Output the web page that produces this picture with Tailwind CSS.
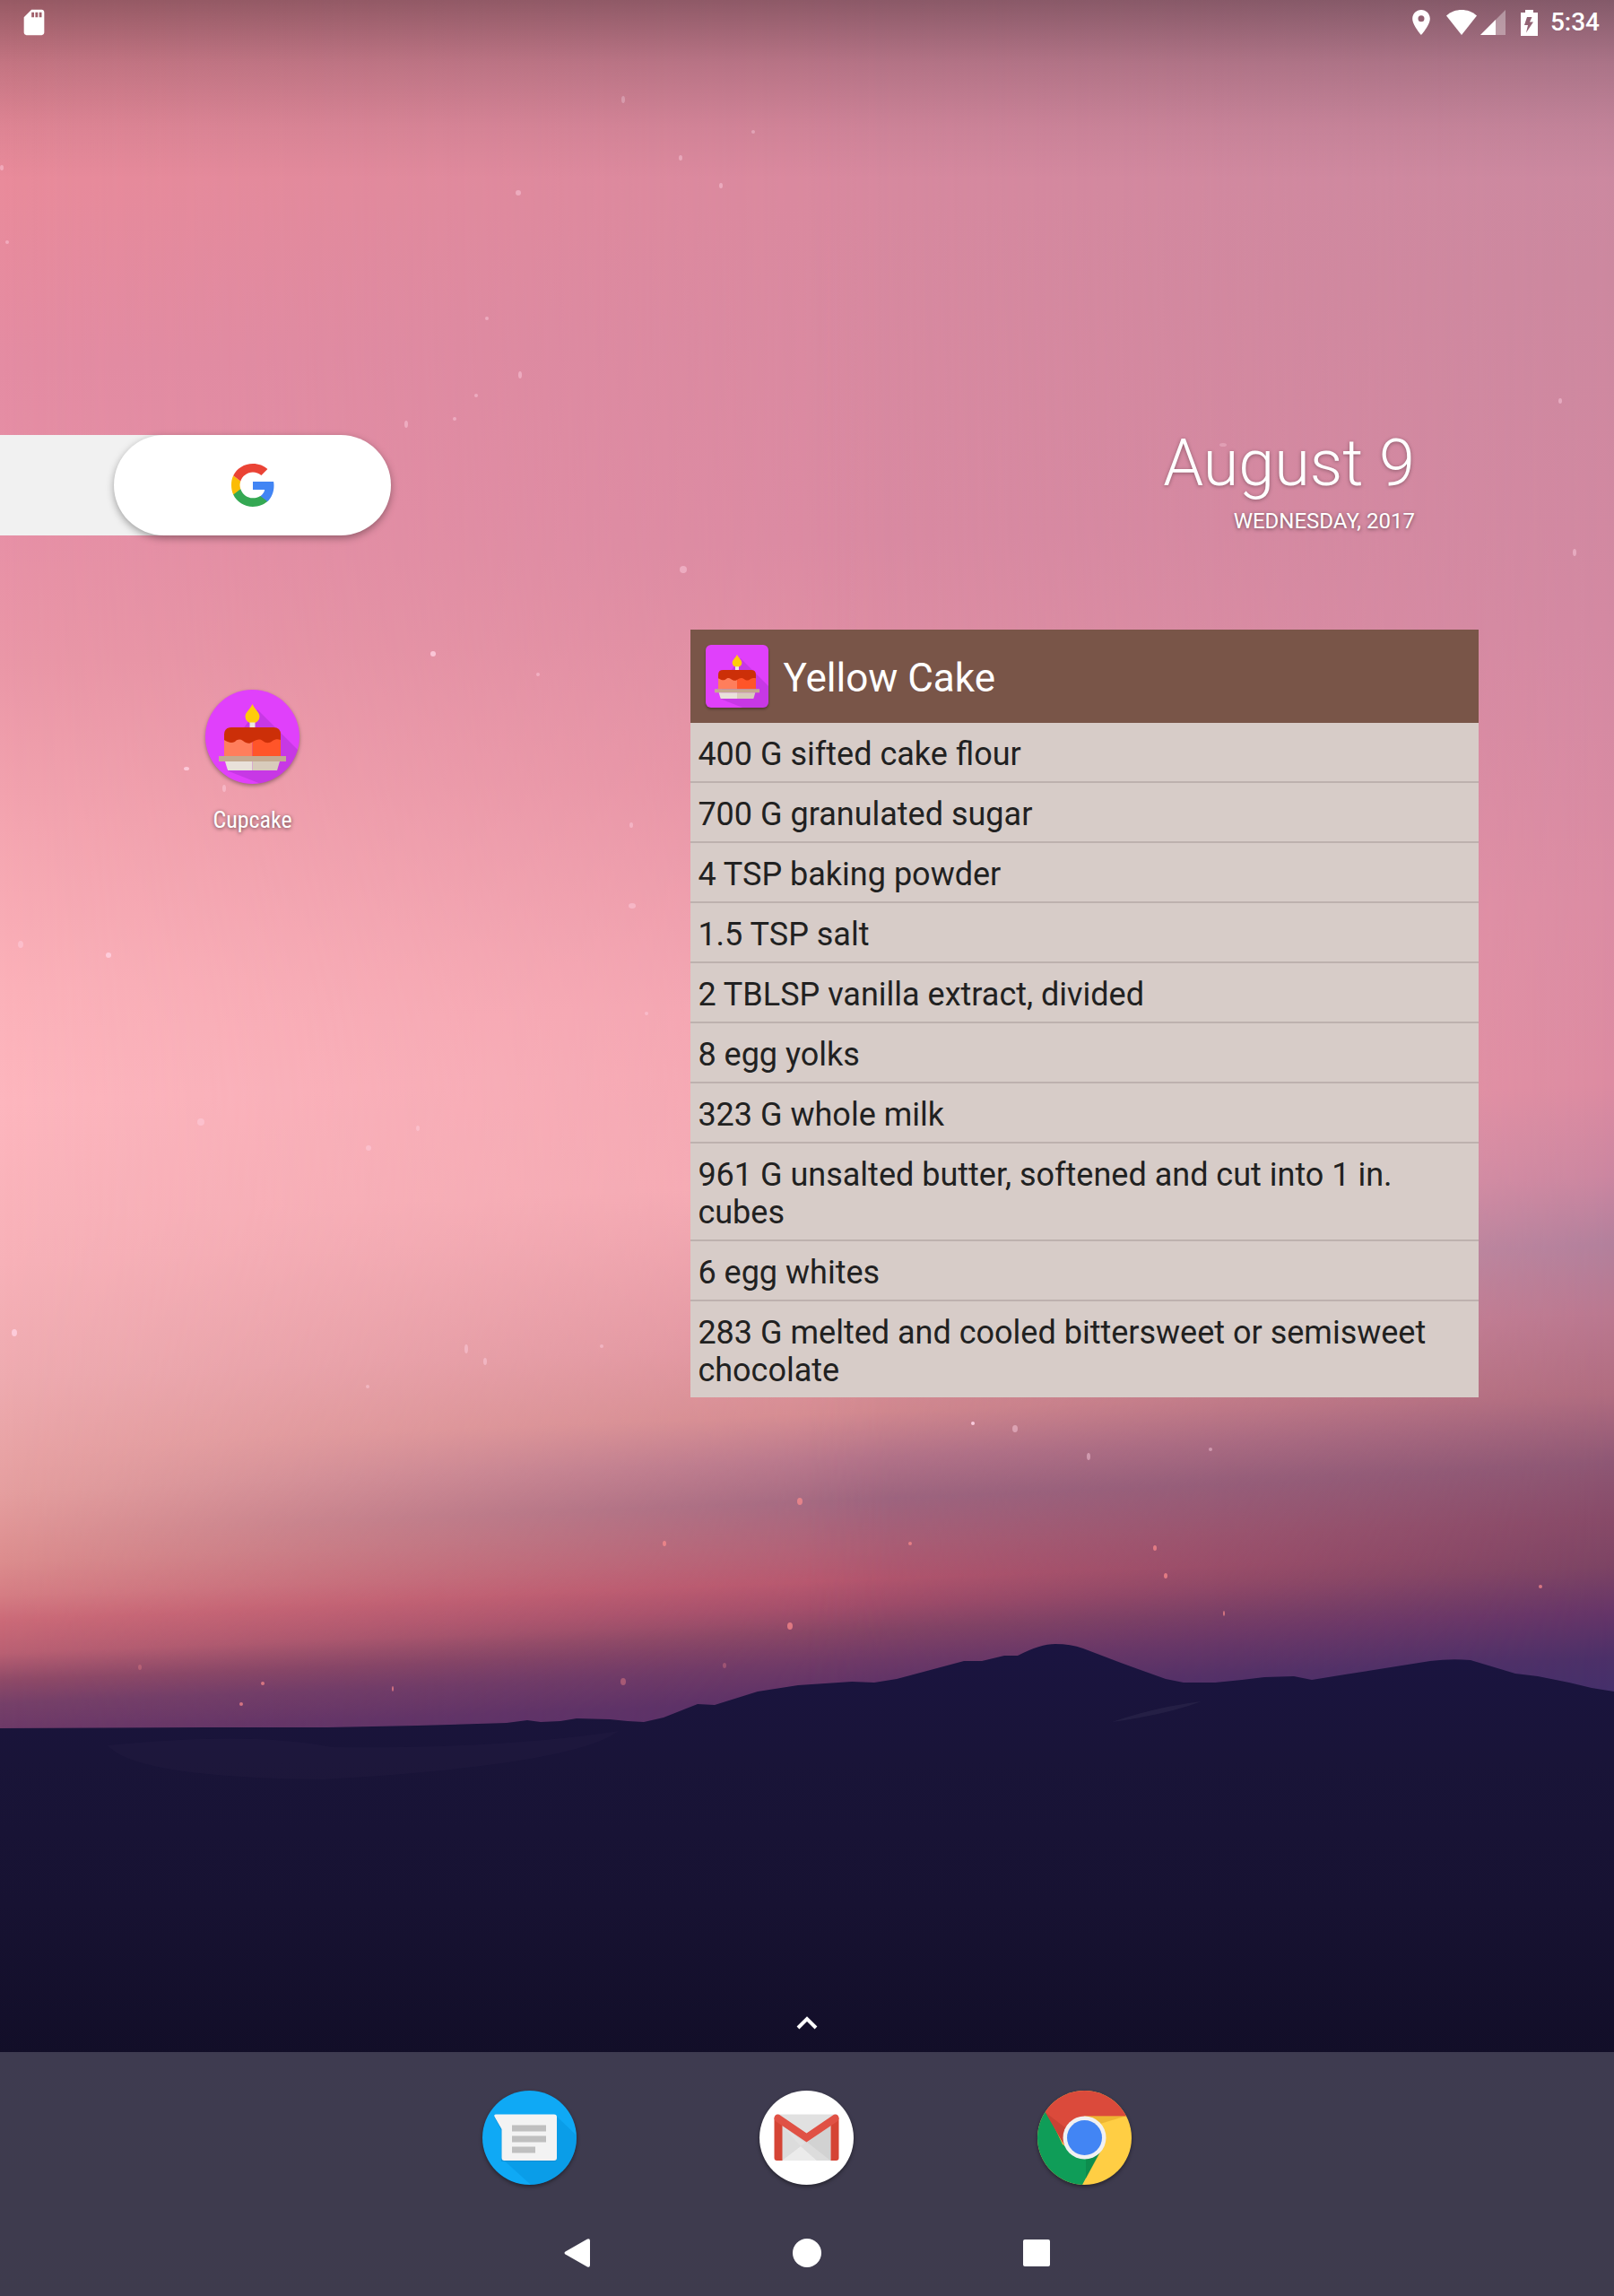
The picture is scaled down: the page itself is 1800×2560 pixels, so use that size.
<!DOCTYPE html>
<html lang="en">
<head>
<meta charset="utf-8">
<meta name="viewport" content="width=device-width, initial-scale=1">
<title>Home screen</title>
<script src="https://cdn.jsdelivr.net/npm/@tailwindcss/browser@4"></script>
</head>
<body class="relative isolate flex min-h-screen flex-col overflow-x-hidden bg-[#16112f] font-['Roboto',sans-serif] text-white">

<!-- Wallpaper -->
<svg class="absolute inset-0 -z-10 h-full w-full" viewBox="0 0 1800 2560" preserveAspectRatio="none" aria-hidden="true">
  <defs>
    <linearGradient id="skyLeft" gradientUnits="userSpaceOnUse" x1="0" y1="0" x2="102" y2="2556">
      <stop offset="0" stop-color="#e88a9a"/><stop offset=".08" stop-color="#e98b9b"/><stop offset=".16" stop-color="#e48ca3"/>
      <stop offset=".23" stop-color="#e790a6"/><stop offset=".29" stop-color="#ea97a7"/><stop offset=".36" stop-color="#f4a5b0"/>
      <stop offset=".43" stop-color="#fbb1b9"/><stop offset=".48" stop-color="#fdb6be"/><stop offset=".55" stop-color="#f7b1b8"/>
      <stop offset=".6" stop-color="#eeabb0"/><stop offset=".65" stop-color="#e59f9f"/><stop offset=".68" stop-color="#dc8d8e"/>
      <stop offset=".695" stop-color="#d57d84"/><stop offset=".706" stop-color="#cb6a78"/><stop offset=".72" stop-color="#b96073"/>
      <stop offset=".732" stop-color="#8f4a68"/><stop offset=".742" stop-color="#764069"/><stop offset=".754" stop-color="#6c3968"/><stop offset=".78" stop-color="#55306a"/>
    </linearGradient>
    <linearGradient id="skyMid" gradientUnits="userSpaceOnUse" x1="0" y1="0" x2="102" y2="2556">
      <stop offset="0" stop-color="#d7899f"/><stop offset=".1" stop-color="#d8899f"/><stop offset=".25" stop-color="#da8aa2"/>
      <stop offset=".35" stop-color="#e492a5"/><stop offset=".45" stop-color="#f2a3b0"/><stop offset=".53" stop-color="#f4a9b3"/>
      <stop offset=".6" stop-color="#e0949f"/><stop offset=".63" stop-color="#d38a90"/><stop offset=".65" stop-color="#b4748a"/>
      <stop offset=".668" stop-color="#9f6680"/><stop offset=".688" stop-color="#ad5f76"/><stop offset=".703" stop-color="#b5566e"/>
      <stop offset=".714" stop-color="#a24d6a"/><stop offset=".725" stop-color="#864565"/><stop offset=".738" stop-color="#703a67"/><stop offset=".755" stop-color="#593067"/>
    </linearGradient>
    <linearGradient id="skyRight" gradientUnits="userSpaceOnUse" x1="0" y1="0" x2="102" y2="2556">
      <stop offset="0" stop-color="#c98aa2"/><stop offset=".15" stop-color="#cc889f"/><stop offset=".3" stop-color="#d389a2"/>
      <stop offset=".42" stop-color="#db8ca3"/><stop offset=".5" stop-color="#dc8ba1"/><stop offset=".54" stop-color="#cb86a0"/>
      <stop offset=".57" stop-color="#b2809c"/><stop offset=".6" stop-color="#ba7890"/><stop offset=".635" stop-color="#b06c80"/>
      <stop offset=".665" stop-color="#8e5774"/><stop offset=".69" stop-color="#874a68"/><stop offset=".71" stop-color="#7c4464"/>
      <stop offset=".73" stop-color="#663568"/><stop offset=".75" stop-color="#4c3068"/><stop offset=".77" stop-color="#42306b"/>
    </linearGradient>
    <linearGradient id="fadeMid"><stop offset="0" stop-color="#000"/><stop offset=".55" stop-color="#fff"/></linearGradient>
    <linearGradient id="fadeRight"><stop offset=".5" stop-color="#000"/><stop offset="1" stop-color="#fff"/></linearGradient>
    <mask id="maskMid" maskUnits="userSpaceOnUse" x="0" y="0" width="1800" height="2560"><rect width="1800" height="2560" fill="url(#fadeMid)"/></mask>
    <mask id="maskRight" maskUnits="userSpaceOnUse" x="0" y="0" width="1800" height="2560"><rect width="1800" height="2560" fill="url(#fadeRight)"/></mask>
    <linearGradient id="scrim" x2="0" y2="1"><stop offset="0" stop-color="#000" stop-opacity=".35"/><stop offset=".35" stop-color="#000" stop-opacity=".16"/><stop offset=".7" stop-color="#000" stop-opacity=".05"/><stop offset="1" stop-color="#000" stop-opacity="0"/></linearGradient>
    <linearGradient id="ground" x2="0" y2="1"><stop offset="0" stop-color="#1a1440"/><stop offset=".18" stop-color="#191438"/><stop offset=".4" stop-color="#171232"/><stop offset=".63" stop-color="#120e28"/><stop offset="1" stop-color="#120e24"/></linearGradient>
  </defs>
  <rect width="1800" height="2000" fill="url(#skyLeft)"/>
  <rect width="1800" height="2000" fill="url(#skyMid)" mask="url(#maskMid)"/>
  <rect width="1800" height="2000" fill="url(#skyRight)" mask="url(#maskRight)"/>
  <g fill="#ffd3e4" fill-opacity=".45">
    <ellipse cx="695" cy="111" rx="2" ry="4"/><ellipse cx="578" cy="215" rx="3" ry="3"/><ellipse cx="804" cy="207" rx="2" ry="3"/><ellipse cx="840" cy="147" rx="2" ry="2"/>
    <ellipse cx="759" cy="176" rx="2" ry="3"/><ellipse cx="2" cy="187" rx="2" ry="3"/><ellipse cx="8" cy="270" rx="2" ry="2"/><ellipse cx="543" cy="355" rx="2" ry="2"/>
    <ellipse cx="580" cy="418" rx="2" ry="4"/><ellipse cx="531" cy="441" rx="2" ry="2"/><ellipse cx="507" cy="467" rx="2" ry="2"/><ellipse cx="453" cy="473" rx="2" ry="4"/>
    <ellipse cx="762" cy="635" rx="4" ry="4"/><ellipse cx="1364" cy="496" rx="4" ry="2" fill-opacity=".3"/><ellipse cx="1740" cy="447" rx="2" ry="3"/><ellipse cx="1756" cy="616" rx="2" ry="4"/>
    <ellipse cx="483" cy="729" rx="3" ry="3" fill-opacity=".8"/><ellipse cx="600" cy="752" rx="2" ry="2"/><ellipse cx="208" cy="857" rx="3" ry="2" fill-opacity=".8"/><ellipse cx="250" cy="879" rx="2" ry="4"/>
    <ellipse cx="23" cy="1053" rx="3" ry="4"/><ellipse cx="121" cy="1065" rx="3" ry="3" fill-opacity=".8"/><ellipse cx="224" cy="1251" rx="4" ry="4"/><ellipse cx="411" cy="1280" rx="3" ry="3"/>
    <ellipse cx="466" cy="1258" rx="2" ry="3"/><ellipse cx="705" cy="1010" rx="4" ry="3"/><ellipse cx="704" cy="920" rx="2" ry="3"/><ellipse cx="721" cy="1130" rx="2" ry="2"/>
    <ellipse cx="16" cy="1486" rx="3" ry="4" fill-opacity=".8"/><ellipse cx="520" cy="1504" rx="2" ry="5"/><ellipse cx="541" cy="1518" rx="2" ry="4"/><ellipse cx="410" cy="1546" rx="2" ry="2"/>
    <ellipse cx="671" cy="1501" rx="2" ry="2"/><ellipse cx="1085" cy="1587" rx="2" ry="2" fill-opacity=".9"/><ellipse cx="1132" cy="1593" rx="3" ry="4"/><ellipse cx="1214" cy="1624" rx="2" ry="4"/>
    <ellipse cx="1350" cy="1616" rx="2" ry="2"/>
  </g>
  <g fill="#ff8d8d" fill-opacity=".7">
    <ellipse cx="892" cy="1674" rx="3" ry="4"/><ellipse cx="741" cy="1721" rx="2" ry="3"/><ellipse cx="1015" cy="1721" rx="2" ry="2"/><ellipse cx="1288" cy="1726" rx="2" ry="3"/>
    <ellipse cx="1300" cy="1757" rx="2" ry="3"/><ellipse cx="1365" cy="1799" rx="1" ry="3"/><ellipse cx="881" cy="1813" rx="3" ry="4"/><ellipse cx="695" cy="1875" rx="3" ry="4" fill-opacity=".4"/>
    <ellipse cx="293" cy="1877" rx="2" ry="2"/><ellipse cx="269" cy="1900" rx="2" ry="2"/><ellipse cx="438" cy="1883" rx="1" ry="3"/><ellipse cx="156" cy="1859" rx="2" ry="3" fill-opacity=".3"/>
    <ellipse cx="1718" cy="1769" rx="2" ry="2"/><ellipse cx="808" cy="1857" rx="2" ry="3" fill-opacity=".3"/>
  </g>
  <path fill="url(#ground)" d="M0 1927L230 1926 365 1926 465 1924 565 1921 588 1918 603 1920 625 1919 643 1916 680 1917 700 1919 718 1920 740 1915 778 1900 797 1901 845 1886 890 1879 905 1878 950 1875 975 1876 1000 1872 1075 1852 1095 1852 1120 1846 1135 1846Q1160 1833 1177 1833T1208 1838L1250 1854 1300 1872 1320 1876 1355 1876 1385 1873 1410 1870 1443 1869 1463 1873 1500 1867 1595 1852Q1618 1849 1640 1851L1660 1857 1690 1866 1715 1869 1750 1876 1775 1882 1800 1886V2560H0z"/>
  <path fill="#ffffff" fill-opacity=".05" d="M1240 1920Q1290 1903 1340 1897Q1300 1912 1240 1920z"/>
  <path fill="#8a6aa0" fill-opacity=".04" d="M120 1946Q280 1930 370 1948Q560 1950 690 1930Q640 1968 360 1984Q150 1982 120 1946z"/>
  <rect width="1800" height="200" fill="url(#scrim)"/>
</svg>

<!-- Artwork shared by the launcher icon and the widget header -->
<svg class="hidden" aria-hidden="true">
  <symbol id="cake" viewBox="0 0 105 105">
    <path fill="#7b1fa2" fill-opacity=".25" d="M58 22L105 69V105H62L24 90 30 60z"/>
    <path fill="#ffcc0a" d="M52.500 16C55 22 60.500 25 60.500 30a8 7.500 0 0 1-16 0C44.500 25 50 22 52.500 16z"/>
    <path fill="#ece6e2" d="M49.500 36.500h6V43h-6z"/>
    <path fill="#ff7e5c" d="M21 50h31.500v24H21z"/><path fill="#ff5529" d="M52.500 50H84v24H52.500z"/>
    <path fill="#cc2f08" d="M21 56V50q0-8 8-8H76q8 0 8 8v6c-3-1-6-1-9 1-4 3-7 3-11 0-4-3-7-1-11 1-4 3-7 2-11-1-3-2-6-2-9 1-4 2-7 1-12-2z"/>
    <path fill="#c4aa90" d="M15 74h75v6H15z"/>
    <path fill="#e9e1da" d="M22 80h30.500v10H25z"/><path fill="#d8cbbb" d="M52.500 80H83l-3 10H52.500z"/>
  </symbol>
</svg>

<header class="flex h-[50px] items-center justify-between pr-4 pl-[21px]">
  <svg class="size-[34px]" viewBox="0 0 24 24" fill="#fff" aria-label="SD card"><path d="M18 2h-8L4 8v12c0 1.100.9 2 2 2h12c1.100 0 2-.9 2-2V4c0-1.100-.9-2-2-2zm-6 6h-2V4h2v4zm3 0h-2V4h2v4zm3 0h-2V4h2v4z"/></svg>
  <div class="flex items-center">
    <svg class="h-7 w-5" viewBox="5 2 14 20" fill="#fff" aria-label="Location"><path d="M12 2C8.130 2 5 5.130 5 9c0 5.250 7 13 7 13s7-7.750 7-13c0-3.870-3.130-7-7-7zm0 9.500a2.500 2.500 0 0 1 0-5 2.500 2.500 0 0 1 0 5z"/></svg>
    <svg class="ml-[18px] h-7 w-[34px]" viewBox="0 0 34 28" fill="#fff" aria-label="Wi-Fi"><path d="M17 28L0 6.500C5 2 11 0 17 0s12 2 17 6.500z"/></svg>
    <svg class="ml-1 size-7" viewBox="0 0 28 28" fill="#fff" aria-label="Mobile signal"><path fill-opacity=".35" d="M28 0V28H0z"/><path d="M17 11V28H0z"/></svg>
    <svg class="ml-[17px] h-[29px] w-[19px]" viewBox="0 0 19 29" fill="#fff" fill-rule="evenodd" aria-label="Battery charging"><path d="M5 0h9v3h5v26H0V3h5zM7 8L4 17h4L6 25.500 14 13.500h-4L12.500 8z"/></svg>
    <time class="ml-[14px] text-[28px] leading-8 font-medium">5:34</time>
  </div>
</header>

<main class="grid grid-cols-5 px-[127px] pt-[435px]">
  <div class="-ml-[127px] h-28 self-start bg-linear-to-r from-[#f1f1f1] from-[190px] to-transparent to-[190px]">
    <button class="ml-[127px] flex h-28 w-[calc(100%-127px)] items-center justify-center rounded-full bg-white shadow-[0_3px_8px_rgba(0,0,0,0.35)]" aria-label="Google search">
      <svg class="size-12" viewBox="0 0 48 48" aria-hidden="true">
        <path fill="#4285f4" d="M47.500 24.500c0-1.600-.1-3.200-.4-4.600H24v9.200h13.200c-.6 3-2.300 5.500-4.900 7.200v6h7.900c4.600-4.200 7.300-10.500 7.300-17.800z"/>
        <path fill="#34a853" d="M24 48c6.600 0 12.200-2.200 16.200-5.900l-7.900-6.100c-2.200 1.500-5 2.300-8.300 2.300-6.400 0-11.800-4.300-13.700-10.100H2.200v6.300C6.100 42.500 14.400 48 24 48z"/>
        <path fill="#fbbc05" d="M10.300 28.200c-.5-1.500-.8-2.900-.8-4.400s.3-3 .8-4.400l-8.100-6.200C.6 16.400 0 20.100 0 23.800s.7 7.400 2.200 10.700z"/>
        <path fill="#ea4335" d="M24 9.400c3.600 0 6.800 1.200 9.400 3.700l7-7C36.200 2.200 30.600 0 24 0 14.400 0 6.100 5.400 2.200 13.200l8.100 6.300C12.200 13.700 17.600 9.400 24 9.400z"/>
      </svg>
    </button>
  </div>
  <div class="col-span-2 col-start-4 pr-[95px] text-right">
    <p class="text-[72px] leading-16 font-light text-shadow-[0_1px_4px_rgba(0,0,0,0.35)]">August 9</p>
    <p class="mt-4 text-2xl text-shadow-[0_1px_4px_rgba(0,0,0,0.5)]">WEDNESDAY, 2017</p>
  </div>

  <a href="#cupcake" class="mt-[172px] flex flex-col items-center self-start">
    <svg class="size-[105px] rounded-full bg-[#e040fb] shadow-[0_2px_4px_rgba(0,0,0,0.35)]" aria-hidden="true"><use href="#cake"/></svg>
    <span class="mt-6 font-['Roboto_Condensed','Roboto',sans-serif] text-[26px] leading-8 text-shadow-[0_1px_4px_rgba(0,0,0,0.6)]">Cupcake</span>
  </a>

  <section class="col-span-3 col-start-3 mt-[105px] mr-6 ml-[25px] bg-[#d7ccc8] text-[#212121]">
    <h1 class="flex h-[104px] items-center gap-4 bg-[#795548] px-[17px] text-[44px] text-white">
      <svg class="size-[70px] rounded-md bg-[#e040fb] shadow-[0_2px_3px_rgba(0,0,0,0.3)]" aria-hidden="true"><use href="#cake"/></svg>
      <span class="pt-[3px]">Yellow Cake</span>
    </h1>
    <ul class="divide-y-2 divide-[#bdb1ae] text-4xl leading-[42px] *:px-2 *:pt-[14px] *:pb-[9px]">
      <li>400 G sifted cake flour</li>
      <li>700 G granulated sugar</li>
      <li>4 TSP baking powder</li>
      <li>1.5 TSP salt</li>
      <li>2 TBLSP vanilla extract, divided</li>
      <li>8 egg yolks</li>
      <li>323 G whole milk</li>
      <li>961 G unsalted butter, softened and cut into 1 in. cubes</li>
      <li>6 egg whites</li>
      <li>283 G melted and cooled bittersweet or semisweet chocolate</li>
    </ul>
  </section>
</main>

<button class="mx-auto mt-auto mb-[17px] p-2" aria-label="All apps">
  <svg class="h-4 w-6" viewBox="0 0 24 16" fill="none" stroke="#fff" stroke-width="4" aria-hidden="true"><path d="M2 14L12 4 22 14"/></svg>
</button>

<footer class="bg-white/19">
  <nav class="grid grid-cols-5 justify-items-center px-[127px] pt-[43px]" aria-label="Favourites">
    <a href="#messages" class="col-start-2" aria-label="Messages">
      <svg class="size-[105px] rounded-full bg-[#0fa9f5] shadow-[0_2px_4px_rgba(0,0,0,0.4)]" viewBox="0 0 105 105">
        <path fill="#0288d1" fill-opacity=".35" d="M82 28L105 50V105H54L22 76z"/>
        <path fill="#0277bd" fill-opacity=".4" d="M13 29l8 15v35h59q3 0 3-3V31z"/>
        <path fill="#f3f3f3" d="M15 26.500H80q3 0 3 3V75q0 3-3 3H24.500q-3 0-3-3V43L13.500 29q-1-2.500 1.500-2.500z"/>
        <path fill="#bfbfbf" d="M33 38.500h38v7H33zM33 50.500h38v7H33zM33 62.500h26v7H33z"/>
      </svg>
    </a>
    <a href="#gmail" aria-label="Gmail">
      <svg class="size-[105px] rounded-full bg-white shadow-[0_2px_4px_rgba(0,0,0,0.4)]" viewBox="0 0 105 105">
        <path fill="#e1e1e1" d="M19 26.500H86V78H19z"/>
        <path fill="#d2d2d2" d="M25 39l54 39V39L52.500 58z"/>
        <path fill="#ebebeb" d="M25 78L46 62l18 16z"/><path fill="#dcdcdc" d="M46 62L25 39V78zM46 62L52.500 57 79 78H64z"/>
        <path fill="#d54435" d="M16.500 30V75q0 3 3 3H25.500V36zM88.500 30V75q0 3-3 3H79.500V36z"/>
        <path fill="#e05145" d="M16.500 31q0-4.500 4-4.500 1.500 0 3 1.300L52.500 47.500 81.500 27.800q1.500-1.300 3-1.300 4 0 4 4.500 0 2-2 3.400L52.500 57.500 18.500 34.400q-2-1.400-2-3.400z"/>
      </svg>
    </a>
    <a href="#chrome" aria-label="Chrome">
      <svg class="size-[105px] rounded-full bg-[#ffce44] shadow-[0_2px_4px_rgba(0,0,0,0.4)]" viewBox="0 0 105 105">
        <path fill="#0f9d58" d="M0 0L28 60 52.500 76 72 64 50 105H0z"/>
        <path fill="#db4a3b" d="M9 24.500L30 61 52.500 28.500H105V0H0z"/>
        <path fill="#b3392c" fill-opacity=".45" d="M9 24.500L28 58 32 42z"/>
        <path fill="#d99a1c" fill-opacity=".45" d="M52.500 28.500H98L70 37z"/>
        <path fill="#0a7a40" fill-opacity=".45" d="M71 67L54 98 54 75z"/>
        <circle cx="52.500" cy="52.500" r="24" fill="#f1f1f1"/><circle cx="52.500" cy="52.500" r="19.500" fill="#4285f4"/>
      </svg>
    </a>
  </nav>
  <nav class="flex h-[124px] items-center justify-center gap-[208px] pt-8 pb-1" aria-label="System">
    <button class="grid size-12 place-items-center" aria-label="Back"><svg class="size-8" viewBox="0 0 32 32" fill="#fff"><path d="M2.500 14.500L27 .6Q30 -.5 30 2.500v27q0 3-3 1.900L2.500 17.500q-2-1.500 0-3z"/></svg></button>
    <button class="grid size-12 place-items-center" aria-label="Home"><span class="size-8 rounded-full bg-white"></span></button>
    <button class="grid size-12 place-items-center" aria-label="Recent apps"><span class="size-[30px] rounded-xs bg-white"></span></button>
  </nav>
</footer>
</body>
</html>
